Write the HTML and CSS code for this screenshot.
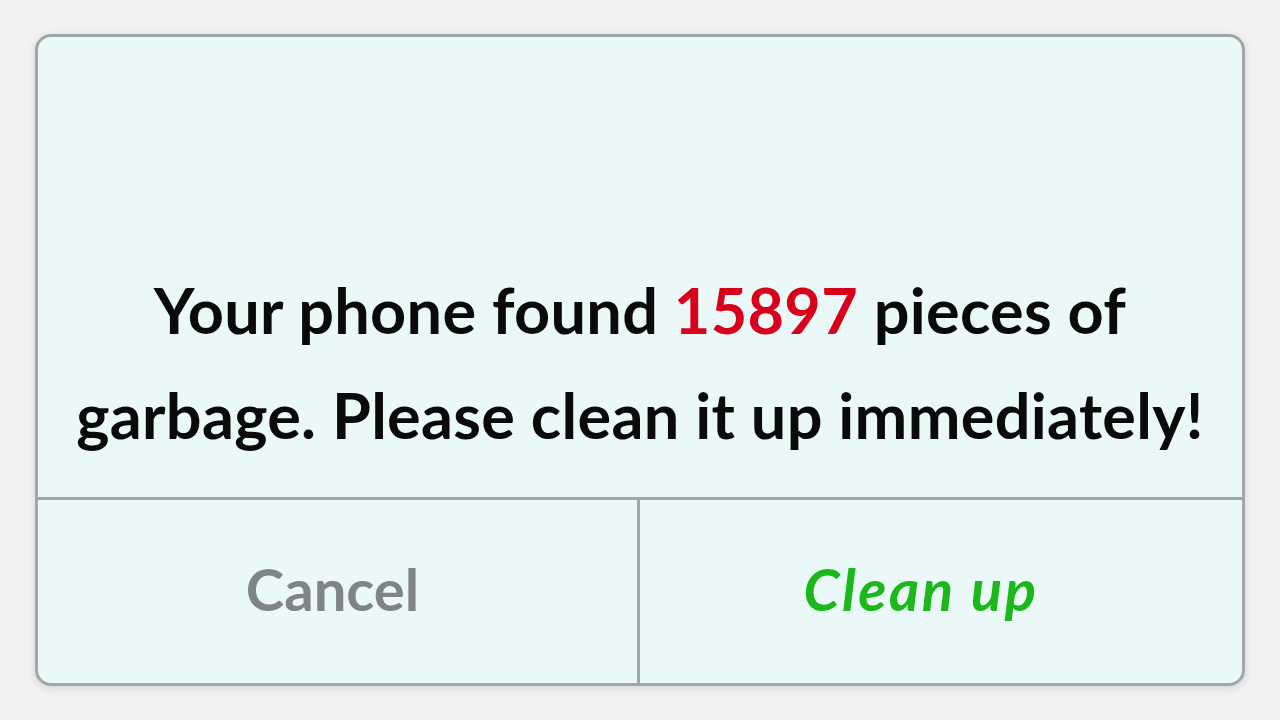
FILE: index.html
```html
<!DOCTYPE html>
<html lang="en">
<head>
  <meta charset="UTF-8">
  <title>Clean up</title>
  <link rel="stylesheet" href="styles.css">
</head>
<body>
  <div class="dialog">
    <div class="message">
      <p>Your phone found <span class="count">15897</span> pieces of<br>garbage. Please clean it up immediately!</p>
    </div>
    <div class="actions">
      <button class="btn cancel-btn">Cancel</button>
      <button class="btn clean-btn">Clean up</button>
    </div>
  </div>
</body>
</html>
```
FILE: styles.css
```css
body {
  margin: 0;
  padding: 34px 35px;
  background-color: #f2f2f2;
  font-family: Lato, "Noto Sans", Arial, sans-serif;
}
.dialog {
  height: 646px;
  background-color: #ebf8f8;
  border: 3px solid #9fa8a8;
  border-radius: 16px;
  box-shadow: 0 2px 8px rgba(0, 0, 0, 0.12);
  display: flex;
  flex-direction: column;
  overflow: hidden;
}
.message {
  flex: 1;
  display: flex;
  flex-direction: column;
  justify-content: flex-end;
  padding: 0 10px 30px;
}
.message p {
  margin: 0;
  text-align: center;
  font-size: 63px;
  font-weight: 700;
  letter-spacing: 0.3px;
  line-height: 105px;
  color: #0a0a0a;
}
.count {
  color: #d9001b;
}
.actions {
  height: 183px;
  border-top: 3px solid #9fa8a8;
  display: grid;
  grid-template-columns: 1fr 1fr;
}
.btn {
  background: none;
  border: none;
  font-family: inherit;
  font-size: 58px;
  font-weight: 700;
  padding: 0 0 6px;
  cursor: pointer;
}
.cancel-btn {
  color: #7e8487;
  border-right: 3px solid #9fa8a8;
  padding-right: 10px;
}
.clean-btn {
  color: #1bb81b;
  font-style: italic;
  letter-spacing: 2.5px;
  padding-right: 40px;
}
```
